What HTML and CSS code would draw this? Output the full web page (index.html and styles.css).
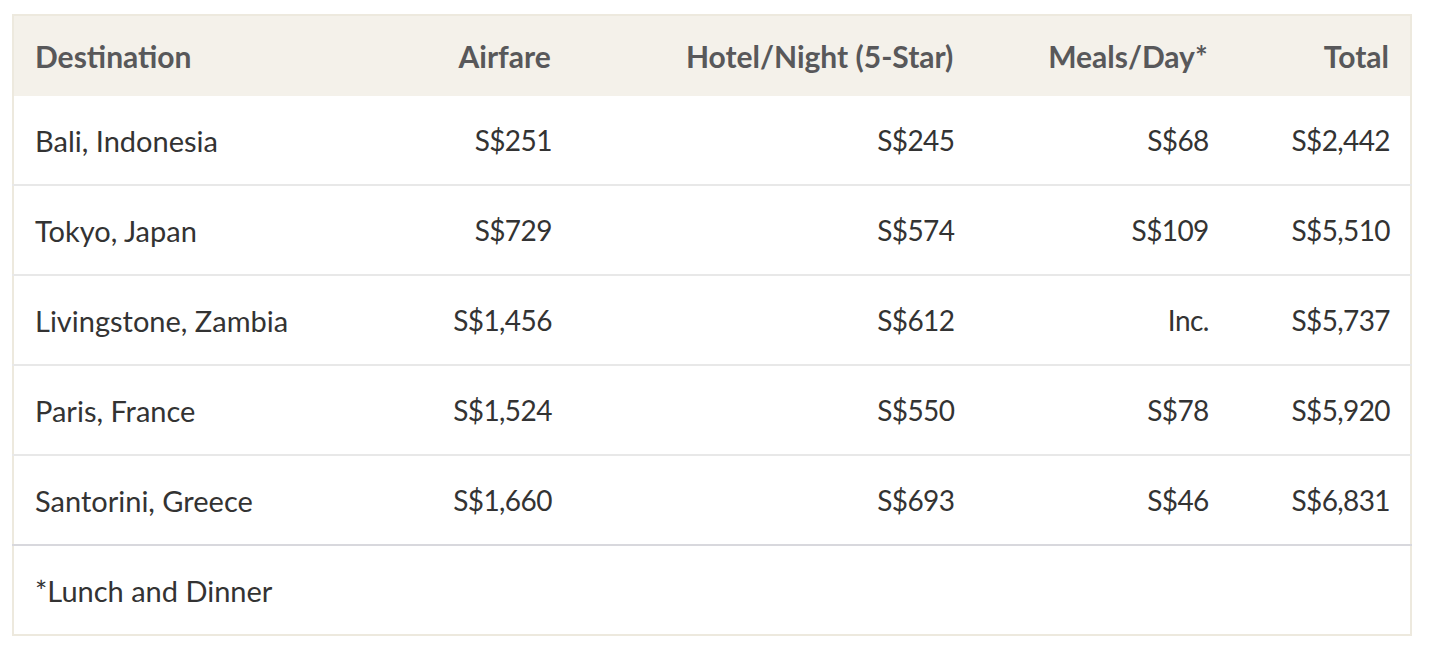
FILE: index.html
```html
<!DOCTYPE html>
<html lang="en">
<head>
<meta charset="utf-8">
<title>Travel costs</title>
<link rel="stylesheet" href="styles.css">
</head>
<body>
<div class="wrap">
<table class="costs">
  <colgroup>
    <col class="c1"><col class="c2"><col class="c3"><col class="c4"><col class="c5">
  </colgroup>
  <thead>
    <tr>
      <th class="left">Destination</th>
      <th>Airfare</th>
      <th>Hotel/Night (5-Star)</th>
      <th>Meals/Day*</th>
      <th>Total</th>
    </tr>
  </thead>
  <tbody>
    <tr><td class="left">Bali, Indonesia</td><td class="num">S$251</td><td class="num">S$245</td><td class="num">S$68</td><td class="num">S$2,442</td></tr>
    <tr><td class="left">Tokyo, Japan</td><td class="num">S$729</td><td class="num">S$574</td><td class="num">S$109</td><td class="num">S$5,510</td></tr>
    <tr><td class="left">Livingstone, Zambia</td><td class="num">S$1,456</td><td class="num">S$612</td><td class="num">Inc.</td><td class="num">S$5,737</td></tr>
    <tr><td class="left">Paris, France</td><td class="num">S$1,524</td><td class="num">S$550</td><td class="num">S$78</td><td class="num">S$5,920</td></tr>
    <tr><td class="left">Santorini, Greece</td><td class="num">S$1,660</td><td class="num">S$693</td><td class="num">S$46</td><td class="num">S$6,831</td></tr>
  </tbody>
  <tfoot>
    <tr><td class="left note" colspan="5">*Lunch and Dinner</td></tr>
  </tfoot>
</table>
</div>
</body>
</html>
```
FILE: styles.css
```css
html, body {
  margin: 0;
  padding: 0;
  background: #ffffff;
}
.wrap {
  padding: 14px 18px 0 12px;
}
.costs {
  width: 1400px;
  border-collapse: collapse;
  table-layout: fixed;
  border: 2px solid #ede9de;
  font-family: "Lato", "Liberation Sans", sans-serif;
  font-size: 29px;
  color: #333333;
}
.c1 { width: 366px; }
.c2 { width: 192px; }
.c3 { width: 402px; }
.c4 { width: 254px; }
.c5 { width: 182px; }
.costs th,
.costs td {
  padding: 0 21px;
  text-align: right;
  vertical-align: middle;
  white-space: nowrap;
}
.costs .left {
  text-align: left;
}
.costs thead th {
  background: #f4f1ea;
  color: #58585a;
  font-weight: 700;
  font-size: 30px;
  height: 80px;
}
.costs tbody td {
  height: 88px;
  border-bottom: 2px solid #e8e8e8;
}
.costs tbody td.num {
  font-size: 28px;
  letter-spacing: -0.6px;
  padding-right: 20px;
}
.costs tbody tr:last-child td {
  border-bottom: 2px solid #d8d8dd;
}
.costs tfoot td {
  height: 88px;
}
```
